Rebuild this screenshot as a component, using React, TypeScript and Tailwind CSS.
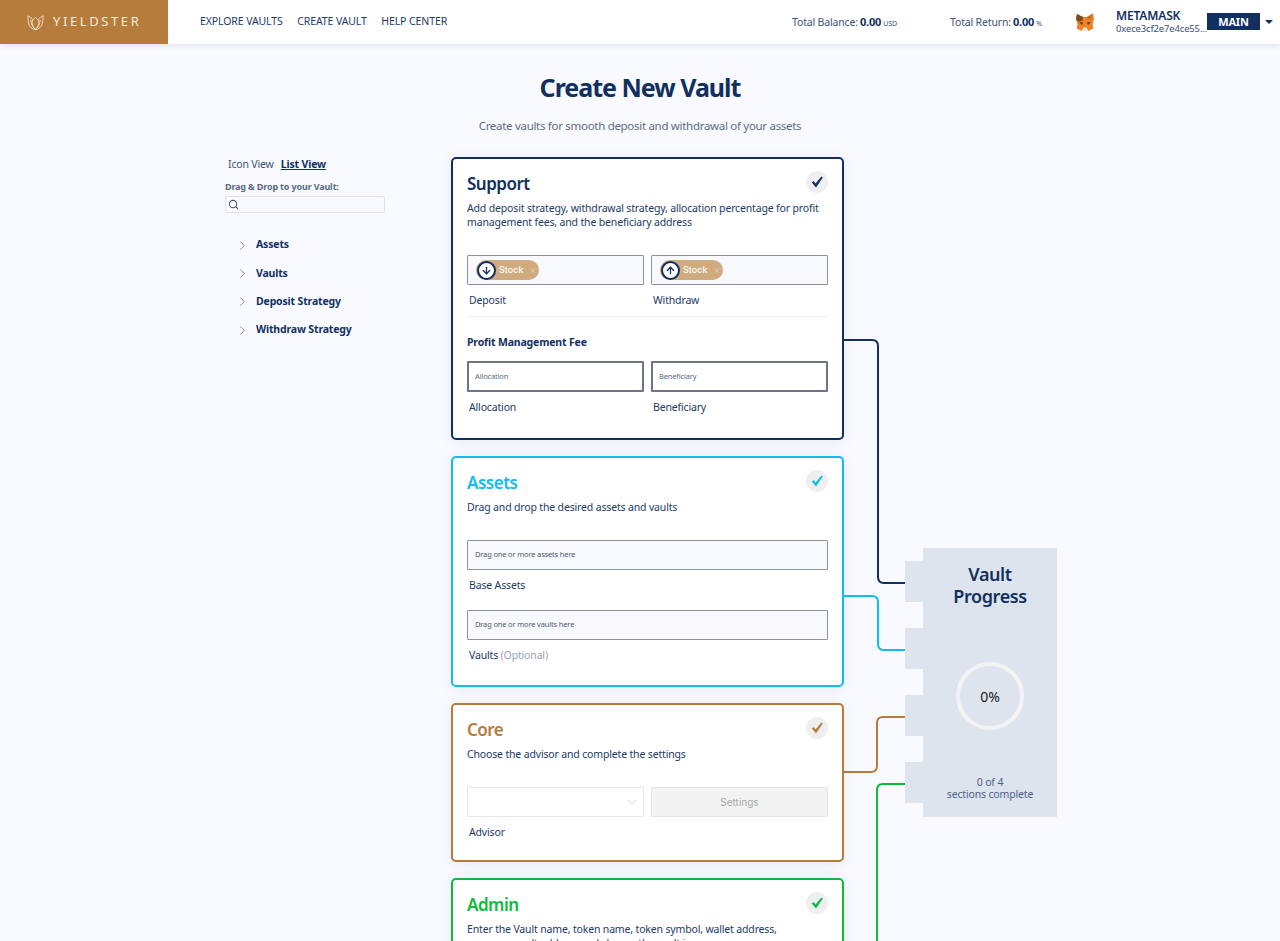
import { ChevronDown, ChevronRight, Search, ArrowDown, ArrowUp, X } from 'lucide-react';
import type { ReactNode } from 'react';

const navLinks = ['EXPLORE VAULTS', 'CREATE VAULT', 'HELP CENTER'];
const listItems = ['Assets', 'Vaults', 'Deposit Strategy', 'Withdraw Strategy'];

function Logo() {
  return (
    <svg width="17" height="17" viewBox="0 0 18 17" fill="none" stroke="#f5e6d3" strokeWidth="0.9" strokeLinejoin="round">
      <path d="M9 16.2 C5 15.5 2.6 13 1.6 9 L0.8 1.4 C3.4 2.6 5.4 4 6.4 6" />
      <path d="M9 16.2 C13 15.5 15.4 13 16.4 9 L17.2 1.4 C14.6 2.6 12.6 4 11.6 6" />
      <path d="M9 16 C6.2 13 5.2 10.4 5.4 8 C5.6 6 7.4 4.4 9 3.2 C10.6 4.4 12.4 6 12.6 8 C12.8 10.4 11.8 13 9 16 Z" />
      <path d="M4 5.5 C4.2 9.5 5.6 13 9 16.2 C12.4 13 13.8 9.5 14 5.5" />
    </svg>
  );
}

function Fox() {
  return (
    <svg className="shrink-0" width="18" height="19" viewBox="0 0 18 19">
      <path d="M1 1 L7 4 L11 4 L17 0.5 L18 6 L16.6 11 L17.4 15.5 L12.5 18 L5.5 18 L0.6 15.5 L1.6 11 L0 6 Z" fill="#ee8228" />
      <path d="M1 1 L7 4 L6.5 8 L1.6 8.5 L0 6 Z" fill="#7d4a22" />
      <path d="M17 0.5 L11 4 L12 6.5 L15 6.5 Z" fill="#c9701f" />
      <path d="M5.5 18 L7.5 14.5 L10.5 14.5 L12.5 18 Z" fill="#f3e6d8" />
      <path d="M3 9 L7 9.5 L6 12 Z M15 9 L11 9.5 L12 12 Z" fill="#5a3a1e" />
    </svg>
  );
}

function Header() {
  return (
    <header className="relative z-20 flex h-[44px] items-center bg-white shadow-[0_1px_6px_rgba(18,48,95,0.14)]">
      <div className="flex h-full w-[168px] shrink-0 items-center gap-[9px] bg-[#b57c3b] pl-[27px]">
        <Logo />
        <span className="text-[13px] tracking-[0.2em] whitespace-nowrap text-[#f5ebdd]">YIELDSTER</span>
      </div>
      <nav className="ml-[32px] flex gap-[14.5px] text-[10.5px] tracking-[-0.1px] whitespace-nowrap text-[#1c3a68]">
        {navLinks.map((link) => (
          <a key={link}>{link}</a>
        ))}
      </nav>
      <div className="ml-auto flex w-[158px] shrink-0 items-baseline gap-[2px] text-[10.5px] whitespace-nowrap text-[#3c5378]">
        Total Balance: <b className="text-[11px] text-[#12305f]">0.00</b> <span className="text-[7px]">USD</span>
      </div>
      <div className="flex w-[126px] shrink-0 items-baseline gap-[2px] text-[10.5px] whitespace-nowrap text-[#3c5378]">
        Total Return: <b className="text-[11px] text-[#12305f]">0.00</b> <span className="text-[7px]">%</span>
      </div>
      <Fox />
      <div className="mb-[2px] ml-[22px] w-[91px] shrink-0 text-[#12305f]">
        <div className="text-[12px] leading-[15px] font-semibold">METAMASK</div>
        <div className="text-[9.5px] leading-[12px] whitespace-nowrap text-[#3c5378]">0xece3cf2e7e4ce55...</div>
      </div>
      <div className="mb-[2px] w-[53px] shrink-0 bg-[#12305f] text-center text-[11px] leading-[17px] font-bold text-white">MAIN</div>
      <span className="mr-[7px] ml-[5px] h-0 w-0 border-x-[4px] border-t-[4px] border-x-transparent border-t-[#12305f]" />
    </header>
  );
}

function Sidebar() {
  return (
    <aside className="w-[226px] shrink-0">
      <div className="flex gap-[7px] pl-[3px] text-[10.5px] leading-[14px] text-[#3c5378]">
        <span>Icon View</span>
        <span className="font-bold text-[#12305f] underline">List View</span>
      </div>
      <div className="mt-[9px] text-[9px] leading-[13px] font-bold text-[#5c6b82]">Drag &amp; Drop to your Vault:</div>
      <div className="mt-[3px] flex h-[17px] w-[160px] items-center rounded-[2px] border border-[#dde1e8] pl-[2px]">
        <Search size={11} strokeWidth={2.25} className="text-[#4a5568]" />
      </div>
      <ul className="mt-[18px] pl-[10px]">
        {listItems.map((item) => (
          <li key={item} className="flex h-[28.4px] items-center gap-[6px] text-[10.5px] font-bold text-[#12305f]">
            <ChevronRight size={15} strokeWidth={1} className="text-[#3c4a5e]" />
            {item}
          </li>
        ))}
      </ul>
    </aside>
  );
}

function Check({ color }: { color: string }) {
  return (
    <div className="absolute top-[12px] right-[14px] flex h-[22px] w-[22px] items-center justify-center rounded-full bg-[#eeeff1]">
      <svg width="12" height="12" viewBox="0 0 12 12" style={{ fill: color }}>
        <path d="M0.8 6.4 L2.6 5 L4.6 7.6 L10.4 0.6 L11.8 1.6 L5 11.4 Z" />
      </svg>
    </div>
  );
}

function Card({ title, color, height, desc, children }: { title: string; color: string; height: number; desc: ReactNode; children?: ReactNode }) {
  return (
    <section
      className="relative shrink-0 rounded-[5px] border-2 bg-white px-[14px] pt-[13px] shadow-[0_2px_14px_rgba(18,48,95,0.08)]"
      style={{ borderColor: color, height }}
    >
      <h2 className="text-[17px] leading-[24px] font-semibold tracking-[-0.5px]" style={{ color }}>
        {title}
      </h2>
      <Check color={color} />
      <p className="mt-[5px] text-[10.5px] leading-[14px] text-[#1c3a68]">{desc}</p>
      {children}
    </section>
  );
}

function Chip({ up }: { up?: boolean }) {
  const Arrow = up ? ArrowUp : ArrowDown;
  return (
    <div className="flex h-[20px] w-[63px] items-center rounded-full bg-[#d1ab80]">
      <span className="ml-[1px] flex h-[19px] w-[19px] items-center justify-center rounded-full border-2 border-[#12305f] bg-white">
        <Arrow size={11} strokeWidth={2.75} className="text-[#12305f]" />
      </span>
      <span className="ml-[3px] font-['Inter',sans-serif] text-[9px] font-medium tracking-normal text-white">Stock</span>
      <X size={7} strokeWidth={2} className="ml-[6px] text-[#f0e2d0]" />
    </div>
  );
}

function Field({ label, children, className }: { label: ReactNode; children?: ReactNode; className: string }) {
  return (
    <div>
      <div className={`flex items-center ${className}`}>{children}</div>
      <div className="mt-[8px] pl-[2px] text-[10.5px] leading-[14px] text-[#1c3a68]">{label}</div>
    </div>
  );
}

function VaultProgress() {
  return (
    <div className="mt-[391px] ml-[61px] flex h-[269px] w-[152px] shrink-0 self-start">
      <div className="flex w-[18px] flex-col gap-[26px] pt-[13px]">
        {[0, 1, 2, 3].map((tab) => (
          <div key={tab} className="h-[41px] bg-[#dee4ee]" />
        ))}
      </div>
      <div className="flex w-[134px] flex-col items-center bg-[#dee4ee]">
        <div className="mt-[16px] text-center text-[18px] leading-[21.5px] font-semibold tracking-[-0.4px] text-[#12305f]">
          Vault
          <br />
          Progress
        </div>
        <div className="mt-[55px] flex h-[68px] w-[68px] items-center justify-center rounded-full border-[4px] border-[#f3f3f3] text-[14px] tracking-normal text-[#1a1a1a]">0%</div>
        <div className="mt-[46px] text-center text-[10.5px] leading-[12px] text-[#4d6288]">
          0 of 4
          <br />
          sections complete
        </div>
      </div>
    </div>
  );
}

function Connectors() {
  return (
    <svg className="pointer-events-none absolute top-[-157px] left-0" width="1280" height="941" fill="none" strokeWidth="2">
      <path d="M844 340 H872 Q878 340 878 346 V577 Q878 583 884 583 H905" stroke="#12305f" />
      <path d="M844 596 H872 Q878 596 878 602 V644 Q878 650 884 650 H905" stroke="#0fbdf2" />
      <path d="M844 772 H871 Q877 772 877 766 V723 Q877 717 883 717 H905" stroke="#b57c3b" />
      <path d="M905 784 H883 Q877 784 877 790 V941" stroke="#0cba3c" />
    </svg>
  );
}

export default function App() {
  const boxed = 'h-[30px] border border-[#8b93a0] bg-[#f8f9fd] rounded-[1px]';
  const strong = 'h-[31px] border-2 border-[#6f7682] rounded-[1px] pl-[6px] text-[7.5px] text-[#5c6b82]';
  const thin = 'h-[30px] border border-[#8b93a0] bg-[#f8f9fd] rounded-[1px] pl-[7px] text-[7.5px] text-[#4d5a6e]';

  return (
    <div className="h-screen overflow-hidden bg-[#f9faff] font-['Noto_Sans','Open_Sans',sans-serif] tracking-[-0.16px]">
      <Header />
      <main>
        <h1 className="mt-[25px] text-center text-[25px] leading-[36px] font-bold tracking-[-1px] text-[#12305f]">Create New Vault</h1>
        <p className="mt-[13px] text-center text-[11.5px] leading-[16px] tracking-[-0.3px] text-[#5c6b82]">Create vaults for smooth deposit and withdrawal of your assets</p>
        <div className="relative mt-[23px] flex pl-[225px]">
          <Connectors />
          <Sidebar />
          <div className="flex w-[393px] shrink-0 flex-col gap-[16px]">
            <Card
              title="Support"
              color="#12305f"
              height={283}
              desc="Add deposit strategy, withdrawal strategy, allocation percentage for profit management fees, and the beneficiary address"
            >
              <div className="mt-[26px] grid grid-cols-2 gap-x-[7px] border-b border-[#eef0f4] pb-[9px]">
                <Field label="Deposit" className={`${boxed} pl-[8px]`}>
                  <Chip />
                </Field>
                <Field label="Withdraw" className={`${boxed} pl-[8px]`}>
                  <Chip up />
                </Field>
              </div>
              <div className="mt-[18px] text-[10.5px] leading-[14px] font-bold text-[#12305f]">Profit Management Fee</div>
              <div className="mt-[12px] grid grid-cols-2 gap-x-[7px]">
                <Field label="Allocation" className={strong}>
                  Allocation
                </Field>
                <Field label="Beneficiary" className={strong}>
                  Beneficiary
                </Field>
              </div>
            </Card>
            <Card title="Assets" color="#0fbdf2" height={231} desc="Drag and drop the desired assets and vaults">
              <div className="mt-[26px]">
                <Field label="Base Assets" className={thin}>
                  Drag one or more assets here
                </Field>
              </div>
              <div className="mt-[18px]">
                <Field
                  label={
                    <>
                      Vaults <span className="text-[#9aa3b2]">(Optional)</span>
                    </>
                  }
                  className={thin}
                >
                  Drag one or more vaults here
                </Field>
              </div>
            </Card>
            <Card title="Core" color="#b57c3b" height={159} desc="Choose the advisor and complete the settings">
              <div className="mt-[26px] grid grid-cols-2 gap-x-[7px]">
                <Field label="Advisor" className="h-[30px] justify-end rounded-[1px] border border-[#e4e6ea] bg-white pr-[4px]">
                  <ChevronDown size={14} strokeWidth={1} className="text-[#a0a5ae]" />
                </Field>
                <div className="flex h-[30px] items-center justify-center rounded-[1px] border border-[#e2e4e8] bg-[#f3f3f4] font-['Inter',sans-serif] text-[10px] tracking-normal text-[#a6a8ac]">Settings</div>
              </div>
            </Card>
            <Card
              title="Admin"
              color="#0cba3c"
              height={300}
              desc={
                <>
                  Enter the Vault name, token name, token symbol, wallet address,
                  <br />
                  manager, vault address and choose the vault icon
                </>
              }
            />
          </div>
          <VaultProgress />
        </div>
      </main>
    </div>
  );
}
